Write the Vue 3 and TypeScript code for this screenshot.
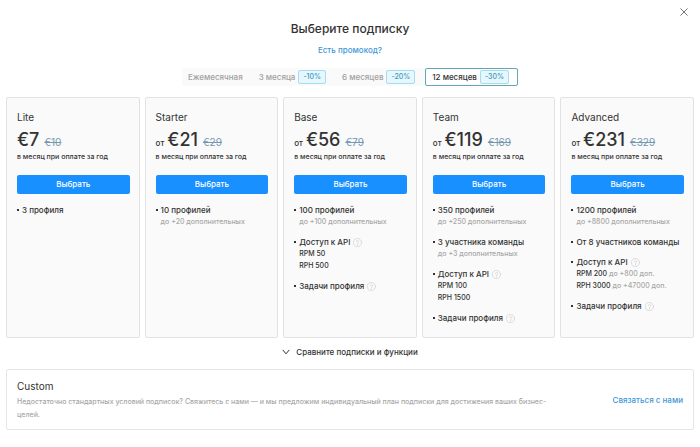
<script setup lang="ts">
import { ref } from 'vue'

interface Period {
  id: string
  label: string
  discount?: string
}

interface Line {
  text?: string
  muted?: string
}

interface Feature {
  title: string
  help?: boolean
  lines?: Line[]
}

interface Plan {
  name: string
  from: boolean
  price: string
  oldPrice: string
  features: Feature[]
}

const periods: Period[] = [
  { id: 'm1', label: 'Ежемесячная' },
  { id: 'm3', label: '3 месяца', discount: '-10%' },
  { id: 'm6', label: '6 месяцев', discount: '-20%' },
  { id: 'm12', label: '12 месяцев', discount: '-30%' },
]

const selected = ref('m12')

const tasks: Feature = { title: 'Задачи профиля', help: true }

const plans: Plan[] = [
  { name: 'Lite', from: false, price: '€7', oldPrice: '€10', features: [{ title: '3 профиля' }] },
  {
    name: 'Starter',
    from: true,
    price: '€21',
    oldPrice: '€29',
    features: [{ title: '10 профилей', lines: [{ muted: 'до +20 дополнительных' }] }],
  },
  {
    name: 'Base',
    from: true,
    price: '€56',
    oldPrice: '€79',
    features: [
      { title: '100 профилей', lines: [{ muted: 'до +100 дополнительных' }] },
      { title: 'Доступ к API', help: true, lines: [{ text: 'RPM 50' }, { text: 'RPH 500' }] },
      tasks,
    ],
  },
  {
    name: 'Team',
    from: true,
    price: '€119',
    oldPrice: '€169',
    features: [
      { title: '350 профилей', lines: [{ muted: 'до +250 дополнительных' }] },
      { title: '3 участника команды', lines: [{ muted: 'до +3 дополнительных' }] },
      { title: 'Доступ к API', help: true, lines: [{ text: 'RPM 100' }, { text: 'RPH 1500' }] },
      tasks,
    ],
  },
  {
    name: 'Advanced',
    from: true,
    price: '€231',
    oldPrice: '€329',
    features: [
      { title: '1200 профилей', lines: [{ muted: 'до +8800 дополнительных' }] },
      { title: 'От 8 участников команды' },
      {
        title: 'Доступ к API',
        help: true,
        lines: [
          { text: 'RPM 200', muted: 'до +800 доп.' },
          { text: 'RPH 3000', muted: 'до +47000 доп.' },
        ],
      },
      tasks,
    ],
  },
]
</script>

<template>
  <main class="page">
    <button class="close" type="button" aria-label="Закрыть">
      <svg viewBox="0 0 8 8" width="8" height="8"><path d="M0.7 0.7 7.3 7.3M7.3 0.7 0.7 7.3" /></svg>
    </button>

    <header class="head">
      <h1>Выберите подписку</h1>
      <a class="promo" href="#">Есть промокод?</a>
      <div class="periods" role="radiogroup" aria-label="Период оплаты">
        <label
          v-for="p in periods"
          :key="p.id"
          class="period"
          :class="{ active: selected === p.id }"
        >
          <input v-model="selected" type="radio" name="period" :value="p.id" />
          <span>{{ p.label }}</span>
          <span v-if="p.discount" class="discount">{{ p.discount }}</span>
        </label>
      </div>
    </header>

    <section class="plans">
      <article v-for="plan in plans" :key="plan.name" class="plan">
        <h2>{{ plan.name }}</h2>
        <div class="cost">
          <span v-if="plan.from" class="from">от</span>
          <span class="price">{{ plan.price }}</span>
          <s class="old">{{ plan.oldPrice }}</s>
        </div>
        <p class="note">в месяц при оплате за год</p>
        <button class="choose" type="button">Выбрать</button>
        <ul class="features">
          <li v-for="f in plan.features" :key="f.title">
            <div class="feature">
              <span>{{ f.title }}</span>
              <svg v-if="f.help" class="help" viewBox="0 0 16 16" width="9" height="9">
                <circle cx="8" cy="8" r="7.2" />
                <path d="M5.8 6.3C5.8 3.6 10.2 3.6 10.2 6.3 10.2 7.8 8 7.9 8 9.7M8 11.2V12.4" />
              </svg>
            </div>
            <div v-for="(l, i) in f.lines" :key="i" class="line">
              <span v-if="l.text">{{ l.text }}</span>
              <span v-if="l.muted" class="muted">{{ l.muted }}</span>
            </div>
          </li>
        </ul>
      </article>
    </section>

    <button class="compare" type="button">
      <svg viewBox="0 0 8 8" width="8" height="8"><path d="M1 2.2 4 5.8 7 2.2" /></svg>
      <span>Сравните подписки и функции</span>
    </button>

    <section class="custom">
      <div class="custom-text">
        <h2>Custom</h2>
        <p>
          Недостаточно стандартных условий подписок? Свяжитесь с нами — и мы предложим
          индивидуальный план подписки для достижения ваших бизнес-целей.
        </p>
      </div>
      <a class="contact" href="#">Связаться с нами</a>
    </section>
  </main>
</template>

<style>
body {
  background: #fff;
}
</style>

<style scoped>
.page {
  position: relative;
  padding: 20px 6px 16px;
  font-family: Inter, 'Liberation Sans', sans-serif;
  font-size: 8px;
  font-weight: 500;
  color: #333;
}

h1,
h2,
p,
ul {
  margin: 0;
  padding: 0;
  font-weight: 500;
}

button {
  margin: 0;
  padding: 0;
  border: 0;
  background: none;
  font: inherit;
  color: inherit;
  cursor: pointer;
}

a {
  color: #3f97d8;
  text-decoration: none;
}

svg {
  display: block;
  flex: none;
  fill: none;
  stroke: currentColor;
  stroke-linecap: round;
  stroke-linejoin: round;
}

.close {
  position: absolute;
  top: 8px;
  right: 12px;
  color: #777;
}

.head {
  display: flex;
  flex-direction: column;
  align-items: center;
}

h1 {
  font-size: 12px;
  line-height: 18px;
}

.promo {
  margin-top: 6px;
  line-height: 12px;
}

.periods {
  display: flex;
  margin-top: 12px;
  background: #fafafa;
}

.period {
  display: flex;
  align-items: center;
  gap: 3px;
  box-sizing: border-box;
  height: 18px;
  padding: 0 8px;
  color: #a0a0a0;
  cursor: pointer;
}

.period:first-child {
  padding-left: 6px;
}

.period input {
  position: absolute;
  opacity: 0;
  width: 1px;
  height: 1px;
  margin: 0;
}

.period.active {
  margin-left: 2px;
  padding: 0 8px 0 6px;
  border: 1px solid #5fa9b5;
  border-radius: 2px;
  background: #fff;
  color: #333;
}

.discount {
  padding: 0 4px;
  border: 1px solid #a5dcf0;
  border-radius: 2px;
  background: #e6f7fd;
  color: #4199bb;
  font-size: 7px;
  line-height: 12px;
}

.plans {
  display: grid;
  grid-template-columns: repeat(5, minmax(0, 1fr));
  gap: 5px;
  margin-top: 11px;
}

.plan {
  padding: 11px 9px 13px 10px;
  border: 1px solid #e2e2e2;
  border-radius: 2px;
  background: #fafafa;
}

h2 {
  font-size: 10px;
  font-weight: 400;
  line-height: 16px;
}

.cost {
  display: flex;
  align-items: baseline;
  margin-top: 5px;
  line-height: 12px;
}

.from {
  margin-right: 3px;
}

.price {
  font-size: 18px;
  line-height: 20px;
}

.old {
  margin-left: 5px;
  color: #7597b0;
  font-size: 10px;
  font-weight: 400;
}

.note {
  margin-top: 1px;
  font-size: 7px;
  line-height: 12px;
}

.choose {
  display: block;
  width: 100%;
  margin-top: 12px;
  border-radius: 2px;
  background: #1890ff;
  color: #fff;
  line-height: 19px;
}

.features {
  display: grid;
  gap: 8px;
  margin-top: 10px;
  list-style: none;
}

.feature {
  display: flex;
  align-items: center;
  line-height: 12px;
}

.feature::before {
  content: '';
  width: 2px;
  height: 2px;
  margin-right: 3px;
  background: currentColor;
}

.feature span {
  white-space: nowrap;
}

.help {
  margin-left: 3px;
  color: #c8c8c8;
}

.line {
  display: flex;
  gap: 2px;
  padding-left: 5px;
  font-size: 7px;
  line-height: 12px;
  white-space: nowrap;
}

.muted {
  color: #a8a8a8;
}

.compare {
  display: flex;
  align-items: center;
  gap: 6px;
  margin: 7px auto 0;
  line-height: 14px;
}

.custom {
  display: flex;
  align-items: center;
  justify-content: space-between;
  margin-top: 10px;
  padding: 8px 10px;
  border: 1px solid #e6e6e6;
  border-radius: 2px;
}

.custom-text {
  flex: 0 1 546px;
}

.custom p {
  margin-top: 1px;
  color: #a8a8a8;
  font-size: 7px;
  line-height: 13px;
}

.contact {
  white-space: nowrap;
}
</style>
